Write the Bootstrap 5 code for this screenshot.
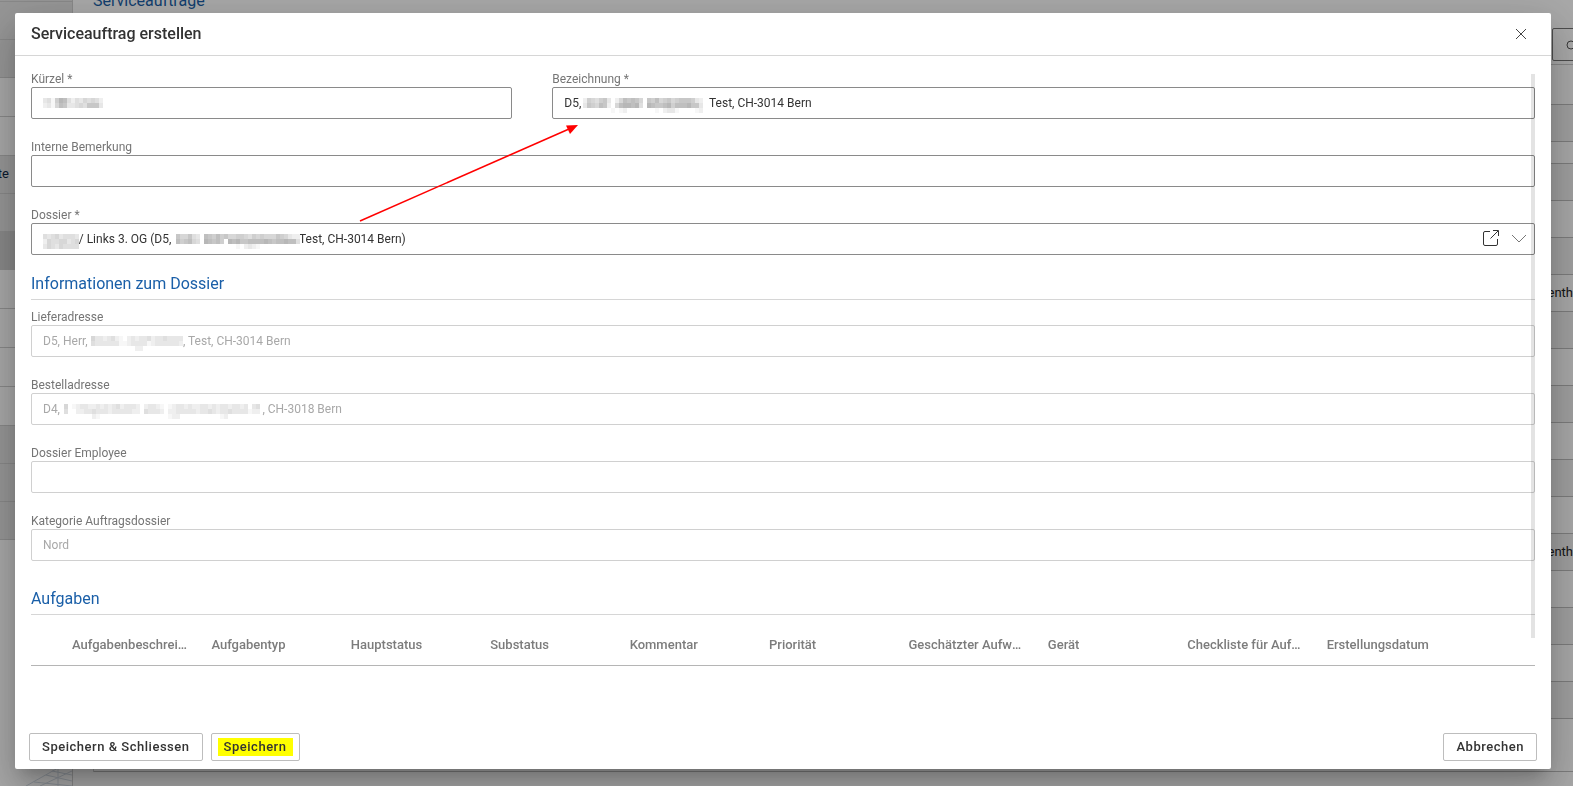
<!DOCTYPE html>
<html lang="de">
<head>
<meta charset="utf-8">
<meta name="viewport" content="width=device-width, initial-scale=1">
<title>Serviceauftrag erstellen</title>
<link rel="stylesheet" href="https://cdn.jsdelivr.net/npm/bootstrap@5.3.0/dist/css/bootstrap.min.css">
<style>
body{font-family:Roboto,"Liberation Sans",sans-serif;font-size:12px;line-height:16px;color:#212121;background:#fff}
.app{height:100vh;overflow:hidden}
.side{width:73px;border-right:1px solid #cfcfcf}
.side li{display:flex;justify-content:flex-end;height:39px;border-bottom:1px solid #cfcfcf;padding:10px 63px 0 0;font-size:13px;color:#0d2746;white-space:nowrap}
.side li.shade{background:#e4e4e4;height:38px}
.side li.dark{background:#cfcfcf;height:38px}
.side li:first-child{height:2px;padding:0}
.deco{width:46px;height:18px}
.pagehead{height:65px;padding-left:20px;border-bottom:1px solid #cfcfcf}
.pagetitle{font-size:16px;line-height:24px;margin-top:-11px;color:#1a5fa8}
.search{width:140px;height:33px;margin:0 -119px 3px 0;border:1px solid #757575;border-radius:2px;padding:8px 12px;background:#fff}
.rows{margin-left:20px;border-left:1px solid #cfcfcf}
.rows li{height:37px;border-bottom:1px solid #bdbdbd;padding:10px 0;font-size:13px;text-align:right;white-space:nowrap;overflow:hidden}
.rows li:nth-child(even){background:#f2f2f2}
.rows li:first-child{height:40px}
.rows li.slim{height:22px}
.rows li.last{height:53px;background:#fff}
.shade-layer{background:rgba(0,0,0,.34);padding:13px 22px 17px 15px}
.dialog{background:#fff;border-radius:2px;box-shadow:0 11px 15px -7px rgba(0,0,0,.2),0 24px 38px 3px rgba(0,0,0,.14),0 9px 46px 8px rgba(0,0,0,.12)}
.dialog-head{height:43px;padding:0 16px;border-bottom:1px solid #d6d6d6}
.dialog-head h1{font-size:16px;line-height:24px;font-weight:500;color:#333}
.dialog-close{width:28px;height:28px}
.dialog-main{padding:15px 16px 0;min-height:0}
.pair{display:grid;grid-template-columns:32% 1fr;column-gap:40px}
.fieldbox{margin-bottom:20px}
.fieldbox label{display:block;color:#757575;line-height:16px}
.fieldbox .form-control{height:32px;border:1px solid #8a8a8a;border-radius:2px;padding:0 11px;font-size:12px;line-height:16px;color:#333;background:#fff}
.fieldbox .form-control:disabled{border-color:#d0d0d0;color:#a8a8a8}
.mosaic{position:absolute;top:11px}
.at-text{left:12px}.at-d4{left:33px}.at-d5{left:31px}.at-herr{left:60px}.at-og{left:145px}
.tools{position:absolute;right:7px;top:5px;gap:9px}
.section{font-size:16px;line-height:18px;font-weight:400;color:#1a5fa8;padding-bottom:6px;border-bottom:1px solid #d6d6d6;margin:0 0 9px}
.section.lower{padding-top:9px;margin-bottom:0}
.tasks{table-layout:fixed;width:100%}
.tasks th{font-size:13px;line-height:20px;font-weight:500;color:#7c7c7c;padding:20px 22px 10px 0;border-bottom:1px solid #b5b5b5;overflow:hidden;text-overflow:ellipsis;white-space:nowrap}
.tasks .w-lead{width:41px}.tasks .w-col{width:9.27%}
.thumb{position:absolute;right:16px;top:18px;bottom:87px;width:4px;background:rgba(0,0,0,.11)}
.arrow{position:absolute;left:344px;top:68px}
.dialog-foot{padding:8px 14px;gap:8px}
.dialog-foot .btn{height:28px;padding:0 12px;font-size:13px;line-height:16px;font-weight:500;letter-spacing:.04em;border:1px solid #bdbdbd;border-radius:2px;color:#333;background:#fff}
.dialog-foot .hl{background:#ff0;padding:1px 6px;margin:0 -6px;display:inline-block}
</style>
</head>
<body>
<div class="app d-flex position-relative">
  <aside class="side flex-shrink-0 d-flex flex-column overflow-hidden">
    <ul class="list-unstyled m-0">
      <li class="shade"></li><li class="shade"></li><li class="shade"></li><li></li><li></li>
      <li class="shade">Geräte</li><li class="shade"></li><li class="dark"></li><li></li><li></li><li></li><li></li>
      <li class="shade"></li><li class="shade"></li><li class="shade"></li>
    </ul>
    <svg class="deco mt-auto ms-auto" viewBox="0 0 46 18" fill="none" stroke="#d3dbe4"><path d="M0 18 32 0M14 18 46 3M20 7 46 13M32 0V18M8 14 46 18M26 3 46 7"/></svg>
  </aside>
  <main class="flex-grow-1 overflow-hidden">
    <div class="pagehead d-flex justify-content-between">
      <div class="pagetitle">Serviceaufträge</div>
      <div class="align-self-end search">
        <svg width="14" height="14" viewBox="0 0 14 14" fill="none" stroke="#555"><circle cx="6" cy="6" r="4"/><path d="m9 9 4 4"/></svg>
      </div>
    </div>
    <ul class="rows list-unstyled mb-0">
      <li></li><li></li><li class="slim"></li><li></li><li></li><li></li>
      <li>Siegenth</li><li></li><li></li><li></li><li></li><li></li><li></li>
      <li>Siegenth</li><li></li><li></li><li></li><li></li><li class="last"></li>
    </ul>
  </main>
</div>

<div class="shade-layer position-fixed top-0 start-0 w-100 h-100 d-flex">
  <section class="dialog flex-grow-1 d-flex flex-column position-relative" role="dialog" aria-labelledby="dlg-title">
    <header class="dialog-head d-flex align-items-center justify-content-between">
      <h1 class="m-0" id="dlg-title">Serviceauftrag erstellen</h1>
      <button type="button" class="dialog-close btn p-0 border-0 d-flex align-items-center justify-content-center" aria-label="Schliessen">
        <svg width="12" height="12" viewBox="0 0 12 12" fill="none" stroke="#444"><path d="m1 1 10 10M11 1 1 11"/></svg>
      </button>
    </header>

    <form class="dialog-main flex-grow-1 position-relative" id="order">
      <div class="pair">
        <div class="fieldbox"><label for="f1">Kürzel *</label>
          <div class="position-relative"><input class="form-control" id="f1"><svg class="mosaic at-text" data-m="341698424354542,231587334547773"></svg></div></div>
        <div class="fieldbox"><label for="f2">Bezeichnung *</label>
          <div class="position-relative"><input class="form-control" id="f2" data-gap="43" value="D5,|Test, CH-3014 Bern"><svg class="mosaic at-d5" data-m="265467302587875076856756777632,376587205899894098778968889773,000000010120000000102331000012"></svg></div></div>
      </div>
      <div class="fieldbox"><label for="f3">Interne Bemerkung</label><input class="form-control" id="f3"></div>
      <div class="fieldbox"><label for="f4">Dossier *</label>
        <div class="position-relative"><input class="form-control" id="f4" data-gap="12,43" value="|/ Links 3. OG (D5,|Test, CH-3014 Bern)">
          <svg class="mosaic at-text" data-m="434534443,254455345,354354444"></svg>
          <svg class="mosaic at-og" data-m="7557430876867556654656555765322,8678540987860989778888987889884,0000000000000001023210000000000"></svg>
          <div class="tools d-flex">
            <button type="button" class="btn p-0 border-0 d-flex" aria-label="Dossier öffnen"><svg width="20" height="20" viewBox="0 0 20 20" fill="none" stroke="#333"><path d="M9 3.500H4Q2.500 3.500 2.500 5V16Q2.500 17.500 4 17.500H15Q16.500 17.500 16.500 16V11M9.500 10.500 17 3M12 2.500H17.500V8"/></svg></button>
            <button type="button" class="btn p-0 border-0 d-flex" aria-label="Auswahl öffnen"><svg width="18" height="20" viewBox="0 0 18 20" fill="none" stroke="#777"><path d="m2 7 7 7 7-7"/></svg></button>
          </div>
        </div></div>

      <h2 class="section">Informationen zum Dossier</h2>
      <div class="fieldbox"><label for="f5">Lieferadresse</label>
        <div class="position-relative"><input class="form-control" id="f5" disabled data-gap="32" value="D5, Herr,|, Test, CH-3014 Bern"><svg class="mosaic at-herr" data-m="53323421023233423343333,43333331123333123333332,00000000000220000000000"></svg></div></div>
      <div class="fieldbox"><label for="f6">Bestelladresse</label>
        <div class="position-relative"><input class="form-control" id="f6" disabled data-gap="68" value="D4,|, CH-3018 Bern"><svg class="mosaic at-d4" data-m="5012332232323423332023321012332322332323323323034,4002233433323333322043332022333332334323343333122,0000000210000000000000000012200000000001200000000"></svg></div></div>
      <div class="fieldbox"><label for="f7">Dossier Employee</label><input class="form-control" id="f7" disabled></div>
      <div class="fieldbox"><label for="f8">Kategorie Auftragsdossier</label><input class="form-control" id="f8" disabled value="Nord"></div>

      <h2 class="section lower">Aufgaben</h2>
      <table class="tasks">
        <colgroup><col class="w-lead"><col class="w-col" span="10"><col></colgroup>
        <thead><tr><th></th><th>Aufgabenbeschreibung</th><th>Aufgabentyp</th><th>Hauptstatus</th><th>Substatus</th><th>Kommentar</th><th>Priorität</th><th>Geschätzter Aufwand</th><th>Gerät</th><th>Checkliste für Aufgabe</th><th>Erstellungsdatum</th><th></th></tr></thead>
      </table>
      <div class="thumb"></div>
      <svg class="arrow" width="222" height="100" viewBox="0 0 222 100"><path d="M1 97 210 5" stroke="#f00" stroke-width="1.500"/><path d="M219 1 211 10 207 1.500Z" fill="#f00"/></svg>
    </form>

    <footer class="dialog-foot d-flex">
      <button type="submit" form="order" class="btn">Speichern &amp; Schliessen</button>
      <button type="button" class="btn"><span class="hl">Speichern</span></button>
      <button type="button" class="btn ms-auto">Abbrechen</button>
    </footer>
  </section>
</div>
<script src="https://cdn.jsdelivr.net/npm/bootstrap@5.3.0/dist/js/bootstrap.bundle.min.js"></script>
<script>
// Leave room in the values for the redacted parts
document.querySelectorAll('[data-gap]').forEach(i => {
  const gaps = i.dataset.gap.split(',');
  i.value = i.value.replace(/\|/g, () => ' '.repeat(+gaps.shift()));
});
// Redaction mosaics: each digit is the darkness of one cell
document.querySelectorAll('.mosaic').forEach(s => {
  const rows = s.dataset.m.split(','), w = 4;
  s.setAttribute('width', rows[0].length * w);
  s.setAttribute('height', rows.length * 5);
  s.innerHTML = rows.map((r, y) => [...r].map((c, x) => {
    const g = 255 - parseInt(c, 16) * 8;
    return `<rect x="${x * w}" y="${y * 5}" width="${w}" height="5" fill="rgb(${g},${g},${g})"/>`;
  }).join('')).join('');
});
</script>
</body>
</html>
